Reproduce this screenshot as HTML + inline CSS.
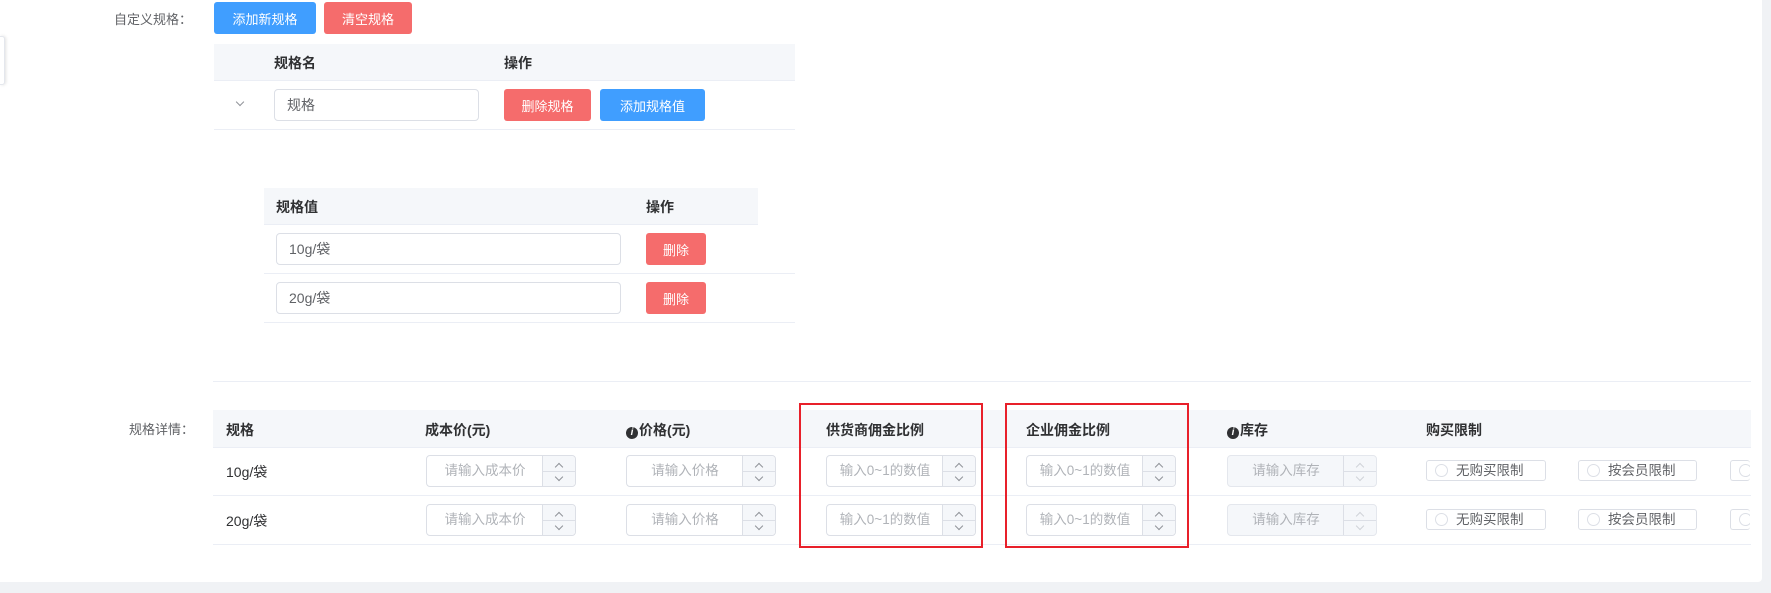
<!DOCTYPE html>
<html><head><meta charset="utf-8"><style>
*{margin:0;padding:0;box-sizing:border-box}
body{width:1771px;height:593px;background:#f0f2f5;position:relative;overflow:hidden;font-family:"Liberation Sans","Noto Sans CJK SC",sans-serif;font-size:14px;color:#606266}
.a{position:absolute}
.card{left:0;top:0;width:1762px;height:582px;background:#fff;border-radius:0 0 4px 0}
.btn{position:absolute;color:#fff;border-radius:3px;font-size:13px;display:flex;align-items:center;justify-content:center}
.blue{background:#409eff}.red{background:#f56c6c}
.hd{position:absolute;background:#f5f7fa;border-bottom:1px solid #ebeef5}
.th{position:absolute;font-weight:bold;color:#303133;font-size:14px}
.line{position:absolute;height:1px;background:#ebeef5}
.inp{position:absolute;border:1px solid #dcdfe6;border-radius:4px;background:#fff;font-size:14px;color:#606266;display:flex;align-items:center;padding-left:12px}
.num{position:absolute;width:150px;height:32px;border:1px solid #dcdfe6;border-radius:4px;background:#fff;color:#b0b3b8;font-size:13.5px}
.num .t{position:absolute;left:0;width:116px;top:0;height:30px;line-height:30px;text-align:center}
.num .s{position:absolute;right:0;top:0;width:33px;height:30px;border-left:1px solid #dcdfe6;background:#f5f7fa;border-radius:0 4px 4px 0}
.num .s:before{content:"";position:absolute;left:0;right:0;top:15px;height:1px;background:#dcdfe6}
.num .s i{position:absolute;left:13px;width:6px;height:6px;border-left:1px solid #909399;border-top:1px solid #909399}
.num.dis{background:#f5f7fa;border-color:#e4e7ed}
.num.dis .s i{border-color:#d0d3d8}
.rad{position:absolute;height:21px;border:1px solid #dcdfe6;border-radius:3px;font-size:13.5px;line-height:19px;color:#606266;padding-left:8px;white-space:nowrap;overflow:hidden}
.rad b{width:13px;height:13px;border:1px solid #dcdfe6;border-radius:50%;margin-right:8px;display:inline-block;vertical-align:-2px}
.rb{position:absolute;border:2px solid #e8202a}
.info{display:inline-block;width:12px;height:12px;border-radius:50%;background:#303133;color:#fff;font-size:10px;font-style:italic;text-align:center;line-height:12px;margin-right:1px;vertical-align:0px}
</style></head><body>
<div class="a card"></div>
<div class="a" style="left:0;top:36px;width:5px;height:49px;background:#fff;border:1px solid #e4e7ed;border-left:none;border-radius:0 3px 3px 0;box-shadow:1px 0 3px rgba(0,0,0,.12)"></div>
<div class="a" style="left:114px;top:9px;font-size:13px">自定义规格：</div>
<div class="btn blue" style="left:214px;top:2px;width:102px;height:32px">添加新规格</div>
<div class="btn red" style="left:324px;top:2px;width:88px;height:32px">清空规格</div>
<div class="hd" style="left:214px;top:44px;width:581px;height:37px"></div>
<div class="th" style="left:274px;top:53px">规格名</div>
<div class="th" style="left:504px;top:53px">操作</div>
<div class="a" style="left:237px;top:99px;width:6px;height:6px;border-right:1px solid #909399;border-bottom:1px solid #909399;transform:rotate(45deg)"></div>
<div class="inp" style="left:274px;top:89px;width:205px;height:32px">规格</div>
<div class="btn red" style="left:504px;top:89px;width:87px;height:32px">删除规格</div>
<div class="btn blue" style="left:600px;top:89px;width:105px;height:32px">添加规格值</div>
<div class="line" style="left:214px;top:129px;width:581px"></div>

<div class="hd" style="left:264px;top:188px;width:494px;height:37px"></div>
<div class="th" style="left:276px;top:197px">规格值</div>
<div class="th" style="left:646px;top:197px">操作</div>
<div class="inp" style="left:276px;top:233px;width:345px;height:32px">10g/袋</div>
<div class="btn red" style="left:646px;top:233px;width:60px;height:32px">删除</div>
<div class="line" style="left:264px;top:273px;width:531px"></div>
<div class="inp" style="left:276px;top:282px;width:345px;height:32px">20g/袋</div>
<div class="btn red" style="left:646px;top:282px;width:60px;height:32px">删除</div>
<div class="line" style="left:264px;top:322px;width:531px"></div>

<div class="line" style="left:213px;top:381px;width:1538px"></div>
<div class="a" style="left:129px;top:419px;font-size:13px">规格详情：</div>
<div class="hd" style="left:213px;top:410px;width:1538px;height:38px"></div>
<div class="th" style="left:226px;top:420px">规格</div>
<div class="th" style="left:425px;top:420px">成本价(元)</div>
<div class="th" style="left:626px;top:420px"><span class="info">i</span>价格(元)</div>
<div class="th" style="left:826px;top:420px">供货商佣金比例</div>
<div class="th" style="left:1026px;top:420px">企业佣金比例</div>
<div class="th" style="left:1227px;top:420px"><span class="info">i</span>库存</div>
<div class="th" style="left:1426px;top:420px">购买限制</div>

<div class="a" style="left:226px;top:462px;color:#303133">10g/袋</div>
<div class="num" style="left:426px;top:455px"><div class="t">请输入成本价</div><div class="s"><i style="top:8px;transform:rotate(45deg)"></i><i style="top:18px;transform:rotate(225deg)"></i></div></div>
<div class="num" style="left:626px;top:455px"><div class="t">请输入价格</div><div class="s"><i style="top:8px;transform:rotate(45deg)"></i><i style="top:18px;transform:rotate(225deg)"></i></div></div>
<div class="num" style="left:826px;top:455px"><div class="t">输入0~1的数值</div><div class="s"><i style="top:8px;transform:rotate(45deg)"></i><i style="top:18px;transform:rotate(225deg)"></i></div></div>
<div class="num" style="left:1026px;top:455px"><div class="t">输入0~1的数值</div><div class="s"><i style="top:8px;transform:rotate(45deg)"></i><i style="top:18px;transform:rotate(225deg)"></i></div></div>
<div class="num dis" style="left:1227px;top:455px"><div class="t">请输入库存</div><div class="s"><i style="top:8px;transform:rotate(45deg)"></i><i style="top:18px;transform:rotate(225deg)"></i></div></div>
<div class="rad" style="left:1426px;top:460px;width:120px"><b></b>无购买限制</div>
<div class="rad" style="left:1578px;top:460px;width:119px"><b></b>按会员限制</div>
<div class="rad" style="left:1730px;top:460px;width:20px;border-right:none"><b></b></div>
<div class="line" style="left:213px;top:495px;width:1538px"></div>

<div class="a" style="left:226px;top:511px;color:#303133">20g/袋</div>
<div class="num" style="left:426px;top:504px"><div class="t">请输入成本价</div><div class="s"><i style="top:8px;transform:rotate(45deg)"></i><i style="top:18px;transform:rotate(225deg)"></i></div></div>
<div class="num" style="left:626px;top:504px"><div class="t">请输入价格</div><div class="s"><i style="top:8px;transform:rotate(45deg)"></i><i style="top:18px;transform:rotate(225deg)"></i></div></div>
<div class="num" style="left:826px;top:504px"><div class="t">输入0~1的数值</div><div class="s"><i style="top:8px;transform:rotate(45deg)"></i><i style="top:18px;transform:rotate(225deg)"></i></div></div>
<div class="num" style="left:1026px;top:504px"><div class="t">输入0~1的数值</div><div class="s"><i style="top:8px;transform:rotate(45deg)"></i><i style="top:18px;transform:rotate(225deg)"></i></div></div>
<div class="num dis" style="left:1227px;top:504px"><div class="t">请输入库存</div><div class="s"><i style="top:8px;transform:rotate(45deg)"></i><i style="top:18px;transform:rotate(225deg)"></i></div></div>
<div class="rad" style="left:1426px;top:509px;width:120px"><b></b>无购买限制</div>
<div class="rad" style="left:1578px;top:509px;width:119px"><b></b>按会员限制</div>
<div class="rad" style="left:1730px;top:509px;width:20px;border-right:none"><b></b></div>
<div class="line" style="left:213px;top:544px;width:1538px"></div>

<div class="rb" style="left:799px;top:403px;width:184px;height:145px"></div>
<div class="rb" style="left:1005px;top:403px;width:184px;height:145px"></div>
</body></html>
